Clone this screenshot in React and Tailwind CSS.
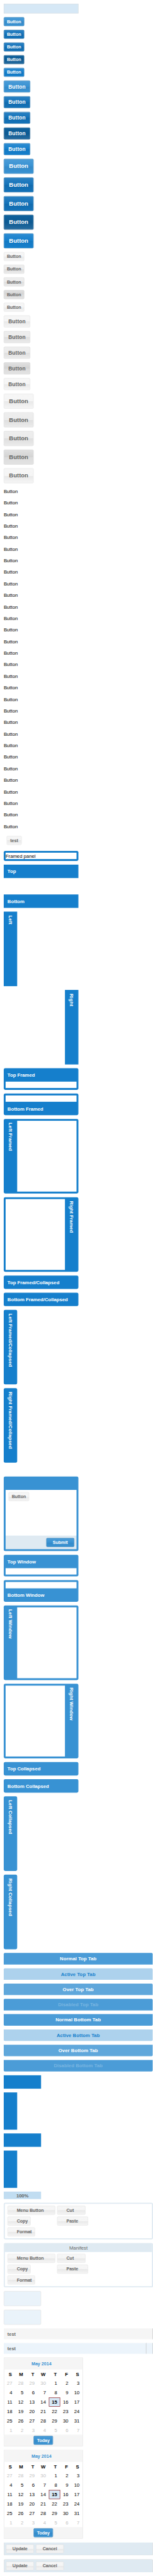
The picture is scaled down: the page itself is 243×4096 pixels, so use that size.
const BLUE = {
  normal: "border-[#126daf] bg-[linear-gradient(180deg,#4b9cd7,#3892d3_50%,#358ac8_51%,#3892d3)] text-white",
  over: "border-[#0d5f9b] bg-[linear-gradient(180deg,#2a81c3,#1472b8_50%,#116bae_51%,#1472b8)] text-white",
  pressed: "border-[#0b4c7c] bg-[linear-gradient(180deg,#0f619c,#0d5a92_50%,#0d5a92_51%,#266b9f)] text-white",
  disabled: "border-[#126daf] bg-[linear-gradient(180deg,#2c8cd2,#157fcc_50%,#1278c2_51%,#157fcc)] text-white",
};
const GRAY = {
  normal: "border-[#e1e1e1] bg-[linear-gradient(180deg,#f6f6f6,#f5f5f5_50%,#e8e8e8_51%,#f5f5f5)] text-[#666]",
  over: "border-[#d5d5d5] bg-[linear-gradient(180deg,#eeeeee,#ebebeb_50%,#dedede_51%,#ebebeb)] text-[#666]",
  pressed: "border-[#c9c9c9] bg-[linear-gradient(180deg,#e0e0e0,#d3d3d3_50%,#dbdbdb_51%,#e3e3e3)] text-[#666]",
  disabled: "border-[#e1e1e1] bg-[linear-gradient(180deg,#f6f6f6,#f5f5f5_50%,#e8e8e8_51%,#f5f5f5)] text-[#666]",
};
const SIZES = {
  small: "h-[24px] text-[12px] tracking-[-0.1px]",
  medium: "h-[32px] text-[14px] tracking-[0.25px]",
  large: "h-[40px] text-[16px]",
};
const STATES = ["normal", "over", "over", "pressed", "disabled"];

function Btn({ tone = GRAY.normal, size = "small", className = "w-[55px]", children }) {
  return (
    <div className={`flex shrink-0 items-center justify-center rounded-[3px] border pb-px font-bold whitespace-nowrap ${tone} ${SIZES[size]} ${className}`}>
      {children}
    </div>
  );
}

function ButtonSet({ palette }) {
  const rows = [["small", "w-[55px]"], ["medium", "w-[71px]"], ["large", "w-[80px] pb-[2px]"]];
  return rows.map(([size, cls]) =>
    STATES.map((s, i) => (
      <Btn key={size + i} tone={palette[s]} size={size} className={cls}>Button</Btn>
    ))
  );
}

const DARK = "bg-[#157fcc]";
const LIGHT = "bg-[#3892d3]";

function Header({ children }) {
  return <div className="flex h-[36px] items-center px-[10px] text-[13px] font-bold text-white">{children}</div>;
}

function SideHeader({ children }) {
  return (
    <div className="flex h-full w-[36px] shrink-0 items-center pt-[10px] text-[13px] font-bold tracking-[0.15px] text-white [writing-mode:vertical-rl]">
      {children}
    </div>
  );
}

function HBar({ tone, title, className = "rounded-[4px]" }) {
  return (
    <div className={`w-[200px] ${tone} ${className}`}>
      <Header>{title}</Header>
    </div>
  );
}

function VBar({ tone, title, className = "rounded-[4px]" }) {
  return (
    <div className={`h-[200px] w-[36px] ${tone} ${className}`}>
      <SideHeader>{title}</SideHeader>
    </div>
  );
}

function FramedSet({ tone, suffix }) {
  return (
    <>
      <div className={`w-[200px] rounded-[4px] pb-[5px] ${tone}`}>
        <Header>Top {suffix}</Header>
        <div className="mx-[5px] h-[17px] bg-white" />
      </div>
      <div className={`w-[200px] rounded-[4px] pt-[5px] ${tone}`}>
        <div className="mx-[5px] h-[17px] bg-white" />
        <Header>Bottom {suffix}</Header>
      </div>
      <div className={`flex h-[200px] w-[200px] rounded-[4px] ${tone}`}>
        <SideHeader>Left {suffix}</SideHeader>
        <div className="my-[5px] mr-[5px] flex-1 bg-white" />
      </div>
      <div className={`flex h-[200px] w-[200px] rounded-[4px] ${tone}`}>
        <div className="my-[5px] ml-[5px] flex-1 bg-white" />
        <SideHeader>Right {suffix}</SideHeader>
      </div>
    </>
  );
}

function CollapsedSet({ tone, suffix }) {
  return (
    <>
      <HBar tone={tone} title={`Top ${suffix}`} />
      <HBar tone={tone} title={`Bottom ${suffix}`} />
      <VBar tone={tone} title={`Left ${suffix}`} />
      <VBar tone={tone} title={`Right ${suffix}`} />
    </>
  );
}

const TAB_STATES = [
  ["Normal", "bg-[#4b9cd7] text-white"],
  ["Active", "bg-[#add2ed] text-[#157fcc]"],
  ["Over", "bg-[#5fa7db] text-white"],
  ["Disabled", "bg-[#4b9cd7] text-[#78b5e1]"],
];

function Tabs({ side, rounding }) {
  return TAB_STATES.map(([name, cls]) => (
    <div key={name} className={`flex h-[31px] w-[399px] items-center justify-center text-[13px] font-bold tracking-[0.1px] ${rounding} ${cls}`}>
      {name} {side} Tab
    </div>
  ));
}

function MenuButtons() {
  return (
    <div className="grid grid-cols-[128px_1fr] gap-[5px] px-[7px] py-[5px]">
      <Btn className="w-[128px] justify-start! pl-[24px]">Menu Button</Btn>
      <Btn className="w-[76px] justify-start! pl-[24px]">Cut</Btn>
      <Btn className="w-[62px] justify-start! pl-[24px]">Copy</Btn>
      <Btn className="w-[83px] justify-start! pl-[24px]">Paste</Btn>
      <Btn className="w-[74px] justify-start! pl-[24px]">Format</Btn>
    </div>
  );
}

const WEEKDAYS = ["S", "M", "T", "W", "T", "F", "S"];
const DAYS = Array.from({ length: 42 }, (_, i) => {
  if (i < 4) return { n: 27 + i, muted: true };
  if (i > 34) return { n: i - 34, muted: true };
  return { n: i - 3 };
});

function Calendar() {
  return (
    <div className="w-[212px] border border-[#e1e1e1] bg-white text-[13px] text-black">
      <div className="flex h-[31px] items-center justify-center bg-[#f5f5f5] pt-px pr-[10px] text-[12px] font-bold text-[#3892d3]">May 2014</div>
      <div className="grid grid-cols-7">
        {WEEKDAYS.map((d, i) => (
          <div key={i} className="flex h-[25px] items-center justify-end pr-[9px] font-bold">{d}</div>
        ))}
        {DAYS.map((d, i) => (
          <div
            key={i}
            className={`flex h-[25px] items-center justify-end ${
              i === 18
                ? "border border-[#8b0000] bg-[#d6e8f6] pr-[7px] font-bold"
                : d.muted
                ? "pr-[8px] text-[#bfbfbf]"
                : "pr-[8px]"
            }`}
          >
            {d.n}
          </div>
        ))}
      </div>
      <div className="flex h-[30px] items-center justify-center bg-[#f5f5f5]">
        <Btn tone={BLUE.normal} className="w-[52px]">Today</Btn>
      </div>
    </div>
  );
}

function EditorButtons({ className }) {
  return (
    <div className={`flex h-[35px] w-[400px] gap-[5px] border-[#dddddd] bg-[#dfeaf2] p-[5px] ${className}`}>
      <Btn className="w-[75px]">Update</Btn>
      <Btn className="w-[75px]">Cancel</Btn>
    </div>
  );
}

export default function App() {
  return (
    <div className="h-[4096px] w-[243px] overflow-hidden bg-white">
      <div className="flex h-[6909px] w-[410px] origin-top-left scale-[0.59285] flex-col items-start gap-[10px] p-[10px] pr-0 font-['Liberation_Sans',Arial,sans-serif] leading-none">
        <div className="h-[26px] w-[200px] border border-[#dddddd] bg-[#d6e8f6]" />
        <ButtonSet palette={BLUE} />
        <ButtonSet palette={GRAY} />
        {Array.from({ length: 30 }, (_, i) => (
          <div key={i} className="h-[21px] pt-[5px] text-[13px] text-black">Button</div>
        ))}
        <div className="px-[8px] py-[6px]">
          <Btn className="w-[40px]">test</Btn>
        </div>
        <div className="w-[200px] rounded-[4px] bg-[#157fcc] p-[5px]">
          <div className="h-[17px] bg-white pt-[2px] text-[13px] text-black">Framed panel</div>
        </div>

        <HBar tone={DARK} title="Top" className="mb-[34px]" />
        <HBar tone={DARK} title="Bottom" className="" />
        <VBar tone={DARK} title="Left" className="" />
        <VBar tone={DARK} title="Right" className="ml-[164px]" />
        <FramedSet tone={DARK} suffix="Framed" />
        <CollapsedSet tone={DARK} suffix="Framed/Collapsed" />

        <div className="mt-[27px] flex h-[200px] w-[200px] flex-col rounded-[4px] bg-[#3892d3] px-[5px] pt-[36px] pb-[5px]">
          <div className="flex-1 bg-white px-[8px] py-[6px]">
            <Btn>Button</Btn>
          </div>
          <div className="flex h-[36px] items-center justify-end bg-[#dfeaf2] pr-[6px]">
            <Btn tone={BLUE.normal} className="w-[75px]">Submit</Btn>
          </div>
        </div>
        <FramedSet tone={LIGHT} suffix="Window" />
        <CollapsedSet tone={LIGHT} suffix="Collapsed" />

        <Tabs side="Top" rounding="rounded-t-[3px]" />
        <Tabs side="Bottom" rounding="rounded-b-[3px]" />

        <div className="h-[36px] w-[100px] bg-[#157fcc]" />
        <div className="h-[100px] w-[36px] bg-[#157fcc]" />
        <div className="h-[36px] w-[100px] bg-[#157fcc]" />
        <div className="h-[100px] w-[36px] bg-[#157fcc]" />
        <div className="flex h-[20px] w-[100px] items-center justify-center bg-[#c1ddf1] text-[13px] font-bold tracking-[-0.3px] text-[#666]">100%</div>

        <div className="w-[400px] rounded-[4px] border-[3px] border-[#dfeaf2] bg-white">
          <MenuButtons />
        </div>
        <div className="w-[400px] rounded-[4px] border-[3px] border-t-0 border-[#dfeaf2] bg-white">
          <div className="flex h-[24px] items-center justify-center bg-[#dfeaf2] text-[13px] text-[#666]">Manifest</div>
          <MenuButtons />
        </div>

        <div className="h-[40px] w-[100px] rounded-[3px] border border-[#e1e1e1] bg-[#eaf3fa]" />
        <div className="h-[40px] w-[100px] rounded-[3px] border border-[#e1e1e1] bg-[#eaf3fa]" />

        <div className="flex h-[29px] w-[400px] items-center border-r border-[#c0c0c0] bg-[#f5f5f5] pl-[10px] text-[12px] font-bold tracking-[0.2px] text-[#666]">test</div>
        <div className="flex h-[29px] w-[400px] items-center justify-between border-r border-[#c0c0c0] bg-[#ecf4fb] pl-[10px] text-[12px] font-bold tracking-[0.2px] text-[#666]">
          test
          <div className="h-full w-[18px] border-l border-[#c0c0c0]" />
        </div>

        <Calendar />
        <Calendar />
        <EditorButtons className="rounded-b-[4px] border border-t-0" />
        <EditorButtons className="rounded-t-[4px] border border-b-0" />
      </div>
    </div>
  );
}
